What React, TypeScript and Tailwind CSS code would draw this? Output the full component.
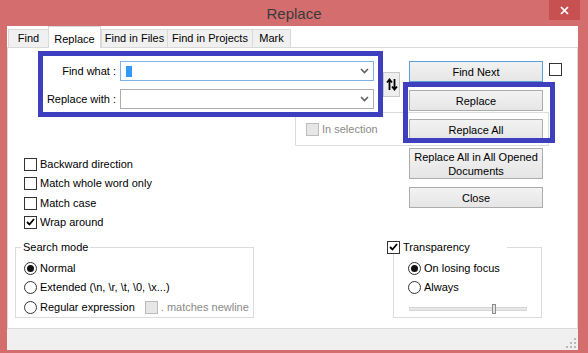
import type { ReactNode } from 'react';

const FONT = "font-['Liberation_Sans',Arial,sans-serif]";

function Check({ checked = false, disabled = false }: { checked?: boolean; disabled?: boolean }) {
  return (
    <span
      className={`flex h-[13px] w-[13px] shrink-0 items-center justify-center border ${
        disabled ? 'border-[#bcbcbc] bg-[#e6e6e6]' : 'border-[#333] bg-white'
      }`}
    >
      {checked && (
        <svg width="9" height="8" viewBox="0 0 9 8">
          <path d="M1 4 L3.5 6.5 L8 1" fill="none" stroke="#000" strokeWidth="1.8" />
        </svg>
      )}
    </span>
  );
}

function Radio({ on = false }: { on?: boolean }) {
  return (
    <span className="flex h-[13px] w-[13px] shrink-0 items-center justify-center rounded-full border border-[#333] bg-white">
      {on && <span className="h-[7px] w-[7px] rounded-full bg-[#111]" />}
    </span>
  );
}

function Row({ children, label, muted = false }: { children: ReactNode; label: string; muted?: boolean }) {
  return (
    <div className="flex h-[13px] shrink-0 items-center gap-[3px] whitespace-nowrap">
      {children}
      <span className={`leading-none ${muted ? 'text-[#8a8a8a]' : 'text-black'}`}>{label}</span>
    </div>
  );
}

function Btn({ children, def = false, tall = false }: { children: ReactNode; def?: boolean; tall?: boolean }) {
  return (
    <div
      className={`flex w-[134px] items-center justify-center border bg-gradient-to-b from-[#f2f2f2] to-[#e6e6e6] text-center leading-[14px] ${
        def ? 'border-[#5a9fd8]' : 'border-[#acacac]'
      } ${tall ? 'h-[31px]' : 'h-[21px]'}`}
    >
      {children}
    </div>
  );
}

function Combo({ focused = false }: { focused?: boolean }) {
  return (
    <div
      className={`flex h-[20px] w-[254px] items-center border bg-white pl-[5px] pr-[4px] ${
        focused ? 'border-[#7eb4ea]' : 'border-[#abadb3]'
      }`}
    >
      {focused && <span className="h-[11px] w-[6px] bg-[#3399ff]" />}
      <svg className="ml-auto" width="9" height="6" viewBox="0 0 9 6">
        <path d="M1 1 L4.5 4.5 L8 1" fill="none" stroke="#606060" strokeWidth="1.6" />
      </svg>
    </div>
  );
}

const tabs = [
  { t: 'Find', w: 'w-[40px]' },
  { t: 'Replace', w: 'w-[53px]' },
  { t: 'Find in Files', w: 'w-[66px]' },
  { t: 'Find in Projects', w: 'w-[85px]' },
  { t: 'Mark', w: 'w-[39px]' },
];

export default function App() {
  return (
    <div className={`${FONT} relative flex h-[353px] w-[588px] flex-col bg-[#d46e6e] text-[11px] text-black`}>
      {/* title bar */}
      <div className="relative flex h-[26px] shrink-0 items-center justify-center">
        <span className="text-[15px] leading-none text-[#3a3a3a]">Replace</span>
        <div className="absolute right-[8px] top-0 flex h-[20px] w-[31px] items-center justify-center bg-[#c75050]">
          <svg width="9" height="9" viewBox="0 0 9 9">
            <path d="M1 1 L8 8 M8 1 L1 8" stroke="#fff" strokeWidth="1.7" />
          </svg>
        </div>
      </div>

      {/* client */}
      <div className="ml-[7px] flex h-[324px] w-[571px] flex-col bg-white">
        {/* tabs */}
        <div className="flex h-[21px] shrink-0 items-end pl-[1px]">
          {tabs.map(({ t, w }) =>
            t === 'Replace' ? (
              <div
                key={t}
                className={`${w} relative z-10 -mb-[1px] flex h-[22px] justify-center border-x border-t border-[#d9d9d9] bg-white pt-[4px]`}
              >
                {t}
              </div>
            ) : (
              <div
                key={t}
                className={`${w} flex h-[18px] items-center justify-center border-l border-t border-[#d9d9d9] bg-[#f0f0f0] last:border-r`}
              >
                {t}
              </div>
            ),
          )}
        </div>

        {/* tab panel */}
        <div className="flex h-[281px] flex-col border-x border-t border-[#d9d9d9] pt-[13px]">
          <div className="flex">
            {/* left side */}
            <div className="flex w-[401px] flex-col">
              <div className="flex">
                <div className="grid grid-cols-[108px_254px] gap-x-[4px] gap-y-[8px]">
                  <span className="flex h-[20px] items-center justify-end">Find what :</span>
                  <Combo focused />
                  <span className="flex h-[20px] items-center justify-end">Replace with :</span>
                  <Combo />
                </div>
                <div className="ml-[9px] mt-[11px] flex h-[25px] w-[17px] items-center justify-center border border-[#c8c8c8] bg-[#eeeeee]">
                  <svg width="12" height="13" viewBox="0 0 12 13">
                    <path d="M3.5 12 V2 M1 4.5 L3.5 1.5 L6 4.5 M8.5 1 V11 M6 8.5 L8.5 11.5 L11 8.5" fill="none" stroke="#000" strokeWidth="1.8" />
                  </svg>
                </div>
              </div>

              <div className="ml-[287px] mt-[3px] flex h-[34px] w-[254px] shrink-0 items-center border border-[#dcdcdc] pl-[10px]">
                <Row label="In selection" muted>
                  <Check disabled />
                </Row>
              </div>

              <div className="ml-[16px] mt-[12px] flex flex-col gap-[6.33px]">
                <Row label="Backward direction">
                  <Check />
                </Row>
                <Row label="Match whole word only">
                  <Check />
                </Row>
                <Row label="Match case">
                  <Check />
                </Row>
                <Row label="Wrap around">
                  <Check checked />
                </Row>
              </div>
            </div>

            {/* buttons */}
            <div className="flex flex-col gap-[8px]">
              <Btn def>Find Next</Btn>
              <Btn>Replace</Btn>
              <Btn>Replace All</Btn>
              <Btn tall>
                Replace All in All Opened
                <br />
                Documents
              </Btn>
              <Btn>Close</Btn>
            </div>
            <div className="ml-[6px] mt-[2px]">
              <Check />
            </div>
          </div>

          {/* bottom groups */}
          <div className="mt-[12px] flex">
            <fieldset className="ml-[7px] h-[77px] w-[239px] border border-[#dcdcdc]">
              <legend className="ml-[5px] px-[2px] leading-[13px]">Search mode</legend>
              <div className="ml-[8px] mt-[8px] flex flex-col gap-[6.5px]">
                <Row label="Normal">
                  <Radio on />
                </Row>
                <Row label="Extended (\n, \r, \t, \0, \x...)">
                  <Radio />
                </Row>
                <div className="flex items-center">
                  <Row label="Regular expression">
                    <Radio />
                  </Row>
                  <div className="ml-[10px]">
                    <Row label=". matches newline" muted>
                      <Check disabled />
                    </Row>
                  </div>
                </div>
              </div>
            </fieldset>

            <fieldset className="ml-[139px] h-[77px] w-[149px] border border-[#dcdcdc]">
              <legend className="-ml-[7px] w-[120px] bg-white">
                <Row label="Transparency">
                  <Check checked />
                </Row>
              </legend>
              <div className="ml-[14px] mt-[8px] flex flex-col gap-[6.5px]">
                <Row label="On losing focus">
                  <Radio on />
                </Row>
                <Row label="Always">
                  <Radio />
                </Row>
              </div>
              <div className="ml-[15px] mt-[9px] flex h-[11px] w-[118px] items-center">
                <div className="flex h-[4px] w-full items-center border border-[#d6d6d6] bg-[#e7e7e7] pl-[82px]">
                  <span className="h-[10px] w-[4px] shrink-0 border border-[#8c8c8c] bg-[#e4e4e4]" />
                </div>
              </div>
            </fieldset>
          </div>
        </div>

        {/* status strip */}
        <div className="flex h-[22px] items-end justify-end border-t border-[#dadada] bg-[#f0f0f0] pb-[2px] pr-[2px]">
          <svg width="10" height="10" viewBox="0 0 10 10" fill="#b8b8b8">
            <rect x="8" y="0" width="2" height="2" />
            <rect x="8" y="4" width="2" height="2" />
            <rect x="4" y="4" width="2" height="2" />
            <rect x="8" y="8" width="2" height="2" />
            <rect x="4" y="8" width="2" height="2" />
            <rect x="0" y="8" width="2" height="2" />
          </svg>
        </div>
      </div>

      {/* annotation boxes */}
      <div className="pointer-events-none absolute left-[38px] top-[51px] h-[66px] w-[345px] border-[5px] border-[#3d3fbf]" />
      <div className="pointer-events-none absolute left-[403px] top-[82px] h-[61px] w-[152px] border-[5px] border-[#3d3fbf]" />
    </div>
  );
}
